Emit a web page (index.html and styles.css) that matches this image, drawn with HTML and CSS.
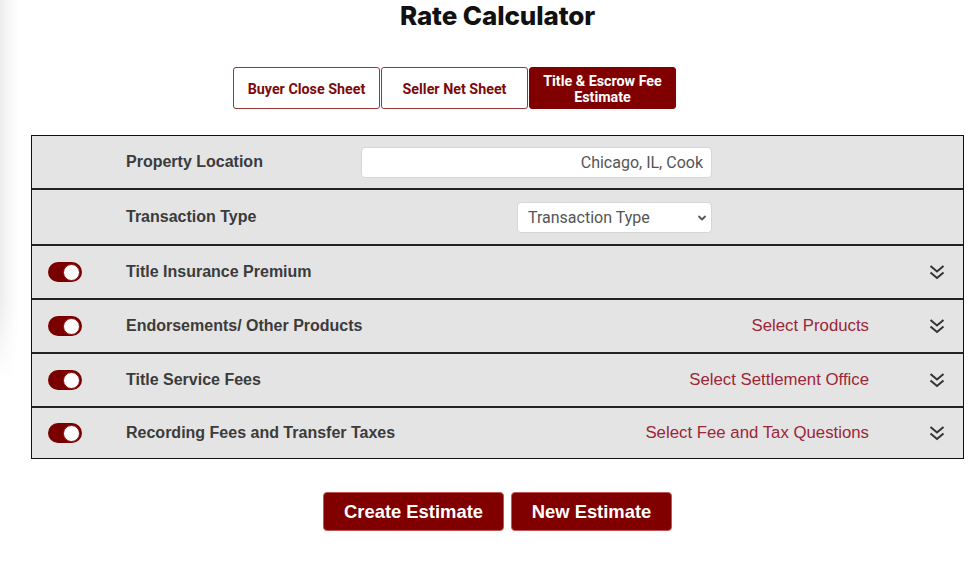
FILE: index.html
```html
<!DOCTYPE html>
<html lang="en">
<head>
<meta charset="utf-8">
<title>Rate Calculator</title>
<link rel="stylesheet" href="styles.css">
</head>
<body>
<div class="page">
  <h1 class="title">Rate Calculator</h1>
  <div class="tabs">
    <button class="tab">Buyer Close Sheet</button>
    <button class="tab">Seller Net Sheet</button>
    <button class="tab tab-active">Title &amp; Escrow Fee Estimate</button>
  </div>

  <div class="table">
    <div class="row">
      <div class="toggle-cell"></div>
      <div class="label">Property Location</div>
      <div class="control">
        <input class="text-input" type="text" value="Chicago, IL, Cook">
      </div>
    </div>
    <div class="row row-tall">
      <div class="toggle-cell"></div>
      <div class="label">Transaction Type</div>
      <div class="control control-end">
        <div class="select-wrap">
          <select class="select"><option>Transaction Type</option></select>
          <svg class="select-caret" width="10" height="10" viewBox="0 0 10 10"><path d="M2 3.5 L5 6.5 L8 3.5" fill="none" stroke="#555" stroke-width="1.8" stroke-linecap="round" stroke-linejoin="round"/></svg>
        </div>
      </div>
    </div>
    <div class="row">
      <div class="toggle-cell"><span class="toggle"><span class="knob"></span></span></div>
      <div class="label">Title Insurance Premium</div>
      <div class="spacer"></div>
      <div class="chev-cell"><svg width="18" height="18" viewBox="0 0 18 18"><path d="M2.5 3 L9 8.5 L15.5 3 M2.5 9.5 L9 15 L15.5 9.5" fill="none" stroke="#333" stroke-width="2"/></svg></div>
    </div>
    <div class="row">
      <div class="toggle-cell"><span class="toggle"><span class="knob"></span></span></div>
      <div class="label">Endorsements/ Other Products</div>
      <div class="spacer"><span class="link">Select Products</span></div>
      <div class="chev-cell"><svg width="18" height="18" viewBox="0 0 18 18"><path d="M2.5 3 L9 8.5 L15.5 3 M2.5 9.5 L9 15 L15.5 9.5" fill="none" stroke="#333" stroke-width="2"/></svg></div>
    </div>
    <div class="row">
      <div class="toggle-cell"><span class="toggle"><span class="knob"></span></span></div>
      <div class="label">Title Service Fees</div>
      <div class="spacer"><span class="link">Select Settlement Office</span></div>
      <div class="chev-cell"><svg width="18" height="18" viewBox="0 0 18 18"><path d="M2.5 3 L9 8.5 L15.5 3 M2.5 9.5 L9 15 L15.5 9.5" fill="none" stroke="#333" stroke-width="2"/></svg></div>
    </div>
    <div class="row row-short">
      <div class="toggle-cell"><span class="toggle"><span class="knob"></span></span></div>
      <div class="label">Recording Fees and Transfer Taxes</div>
      <div class="spacer"><span class="link">Select Fee and Tax Questions</span></div>
      <div class="chev-cell"><svg width="18" height="18" viewBox="0 0 18 18"><path d="M2.5 3 L9 8.5 L15.5 3 M2.5 9.5 L9 15 L15.5 9.5" fill="none" stroke="#333" stroke-width="2"/></svg></div>
    </div>
  </div>

  <div class="actions">
    <button class="btn btn-create">Create Estimate</button>
    <button class="btn btn-new">New Estimate</button>
  </div>
</div>
</body>
</html>
```

FILE: styles.css
```css
* { box-sizing: border-box; }
html, body { margin: 0; padding: 0; }
body {
  background:
    linear-gradient(to bottom, rgba(255,255,255,0) 300px, #fff 380px) no-repeat,
    linear-gradient(to right, #ececec 0px, #f6f6f6 8px, #ffffff 18px) no-repeat,
    #fff;
  background-size: 18px 380px, 18px 380px;
  font-family: "Liberation Sans", Arial, sans-serif;
  width: 980px;
  height: 562px;
  overflow: hidden;
}
.page {
  padding: 0 16px 0 31px;
  display: flex;
  flex-direction: column;
}
.title {
  margin: 0;
  font-family: Inter, "Liberation Sans", sans-serif;
  font-weight: 800;
  font-size: 26px;
  line-height: 32px;
  color: #111;
  text-align: center;
  letter-spacing: -0.1px;
}
.tabs {
  display: flex;
  gap: 1px;
  margin: 35px 0 0 202px;
}
.tab {
  width: 147px;
  height: 42px;
  background: #fff;
  border: 1px solid #9a3535;
  border-radius: 3px;
  color: #7d0a0a;
  font-family: Roboto, "Liberation Sans", sans-serif;
  font-weight: 700;
  font-size: 14.3px;
  line-height: 16px;
  padding: 2px 10px 0;
}
.tab-active {
  background: #800000;
  border-color: #800000;
  color: #fff;
}
.table {
  margin-top: 26px;
  border: 1px solid #111;
  background: #e4e4e4;
}
.row {
  height: 54px;
  border-top: 2px solid #222;
  display: flex;
  align-items: center;
}
.row:first-child { height: 52px; border-top: 0; }
.row-tall { height: 56px; }
.row-short { height: 52px; }
.toggle-cell {
  width: 94px;
  padding-left: 16px;
  display: flex;
  align-items: center;
}
.toggle {
  width: 34px;
  height: 20px;
  border-radius: 10px;
  background: #7a0000;
  display: flex;
  align-items: center;
  justify-content: flex-end;
  padding-right: 2px;
}
.knob {
  width: 17px;
  height: 17px;
  border-radius: 50%;
  background: #fff;
  border: 1px solid #8a1010;
}
.label {
  width: 235px;
  font-weight: 700;
  font-size: 16px;
  color: #3b3b3b;
  white-space: nowrap;
}
.control {
  width: 351px;
  display: flex;
}
.control-end { justify-content: flex-end; }
.text-input {
  width: 351px;
  height: 31px;
  border: 1px solid #d6d6d6;
  border-radius: 4px;
  background: #fff;
  text-align: right;
  padding: 0 8px;
  font-family: Roboto, "Liberation Sans", sans-serif;
  font-size: 16px;
  color: #555;
  outline: none;
}
.select-wrap {
  position: relative;
  width: 195px;
  height: 31px;
}
.select {
  appearance: none;
  -webkit-appearance: none;
  width: 100%;
  height: 100%;
  border: 1px solid #d6d6d6;
  border-radius: 4px;
  background: #fff;
  padding: 0 10px;
  font-family: Roboto, "Liberation Sans", sans-serif;
  font-size: 16px;
  color: #555;
}
.select-caret {
  position: absolute;
  right: 5px;
  top: 11px;
}
.spacer {
  flex: 1;
  display: flex;
  justify-content: flex-end;
}
.link {
  font-size: 16.8px;
  color: #9c2638;
  white-space: nowrap;
}
.chev-cell {
  width: 94px;
  padding-left: 59px;
  display: flex;
  align-items: center;
}
.chev-cell svg { display: block; }
.actions {
  display: flex;
  justify-content: center;
  gap: 7px;
  margin-top: 33px;
}
.btn {
  height: 39px;
  background: #800000;
  border: 1px solid #c45555;
  border-radius: 4px;
  color: #fff;
  font-family: "Liberation Sans", Arial, sans-serif;
  font-weight: 700;
  font-size: 18.4px;
  padding: 0;
}
.btn-create { width: 181px; }
.btn-new { width: 161px; }
```
